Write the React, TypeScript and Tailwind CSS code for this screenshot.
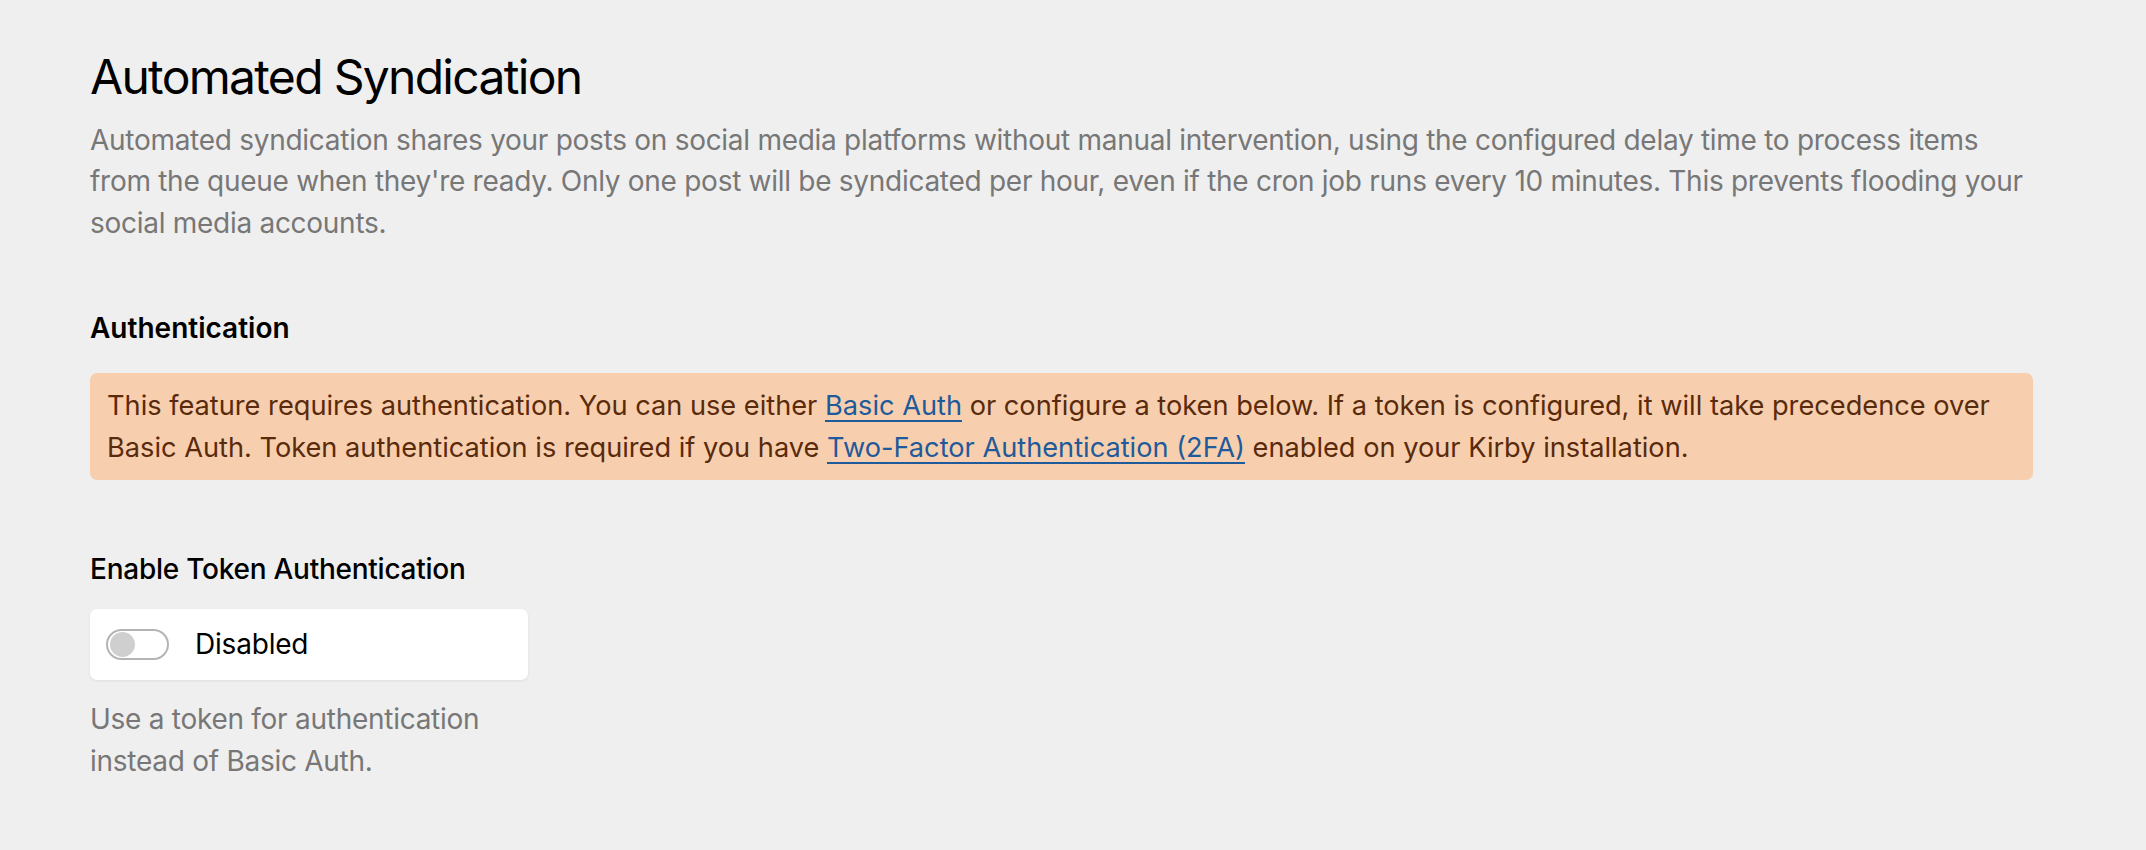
export default function App() {
  return (
    <div className="min-h-screen bg-[#efefef] font-['Inter','Noto_Sans',sans-serif] text-black">
      <div className="w-[1943px] pl-[90px] pt-[48px] box-content">
        <h1 className="text-[48px] leading-[57.6px] font-normal tracking-[-1.7px]">
          Automated Syndication
        </h1>
        <p className="mt-[14px] text-[28px] leading-[41.5px] tracking-[-0.28px] text-[#777777]">
          Automated syndication shares your posts on social media platforms without manual intervention, using the configured delay time to process items
          <br />
          from the queue when they're ready. Only one post will be syndicated per hour, even if the cron job runs every 10 minutes. This prevents flooding your social media accounts.
        </p>

        <h2 className="mt-[64px] text-[28px] leading-[41px] font-semibold">
          Authentication
        </h2>
        <div className="mt-[24px] rounded-[7px] bg-[#f7cfae] pl-[17px] pr-[17px] pt-[12px] pb-[11px] text-[27.2px] leading-[42px] text-[#5a2a0c]">
          This feature requires authentication. You can use either{" "}
          <a href="#" className="text-[#1f5a9a] underline underline-offset-[5px] decoration-[1.5px]">
            Basic Auth
          </a>{" "}
          or configure a token below. If a token is configured, it will take precedence over Basic Auth. Token authentication is required if you have{" "}
          <a href="#" className="text-[#1f5a9a] underline underline-offset-[5px] decoration-[1.5px]">
            Two-Factor Authentication (2FA)
          </a>{" "}
          enabled on your Kirby installation.
        </div>

        <div className="mt-[69px] w-[438px]">
          <label className="block text-[28px] leading-[41px] font-medium tracking-[-0.25px]">
            Enable Token Authentication
          </label>
          <div className="mt-[19px] flex h-[71px] items-center rounded-[7px] bg-white pl-[16px] shadow-[0_1px_3px_rgba(0,0,0,0.08)]">
            <span className="flex h-[31px] w-[63px] items-center rounded-full border-2 border-[#b4b4b4] bg-white pl-[2px]">
              <span className="h-[25px] w-[25px] rounded-full bg-[#cfcfcf]" />
            </span>
            <span className="ml-[26px] text-[28px] leading-[41px] tracking-[-0.2px]">Disabled</span>
          </div>
          <p className="mt-[18px] text-[28px] leading-[42px] tracking-[-0.27px] text-[#777777]">
            Use a token for authentication instead of Basic Auth.
          </p>
        </div>
      </div>
    </div>
  );
}
